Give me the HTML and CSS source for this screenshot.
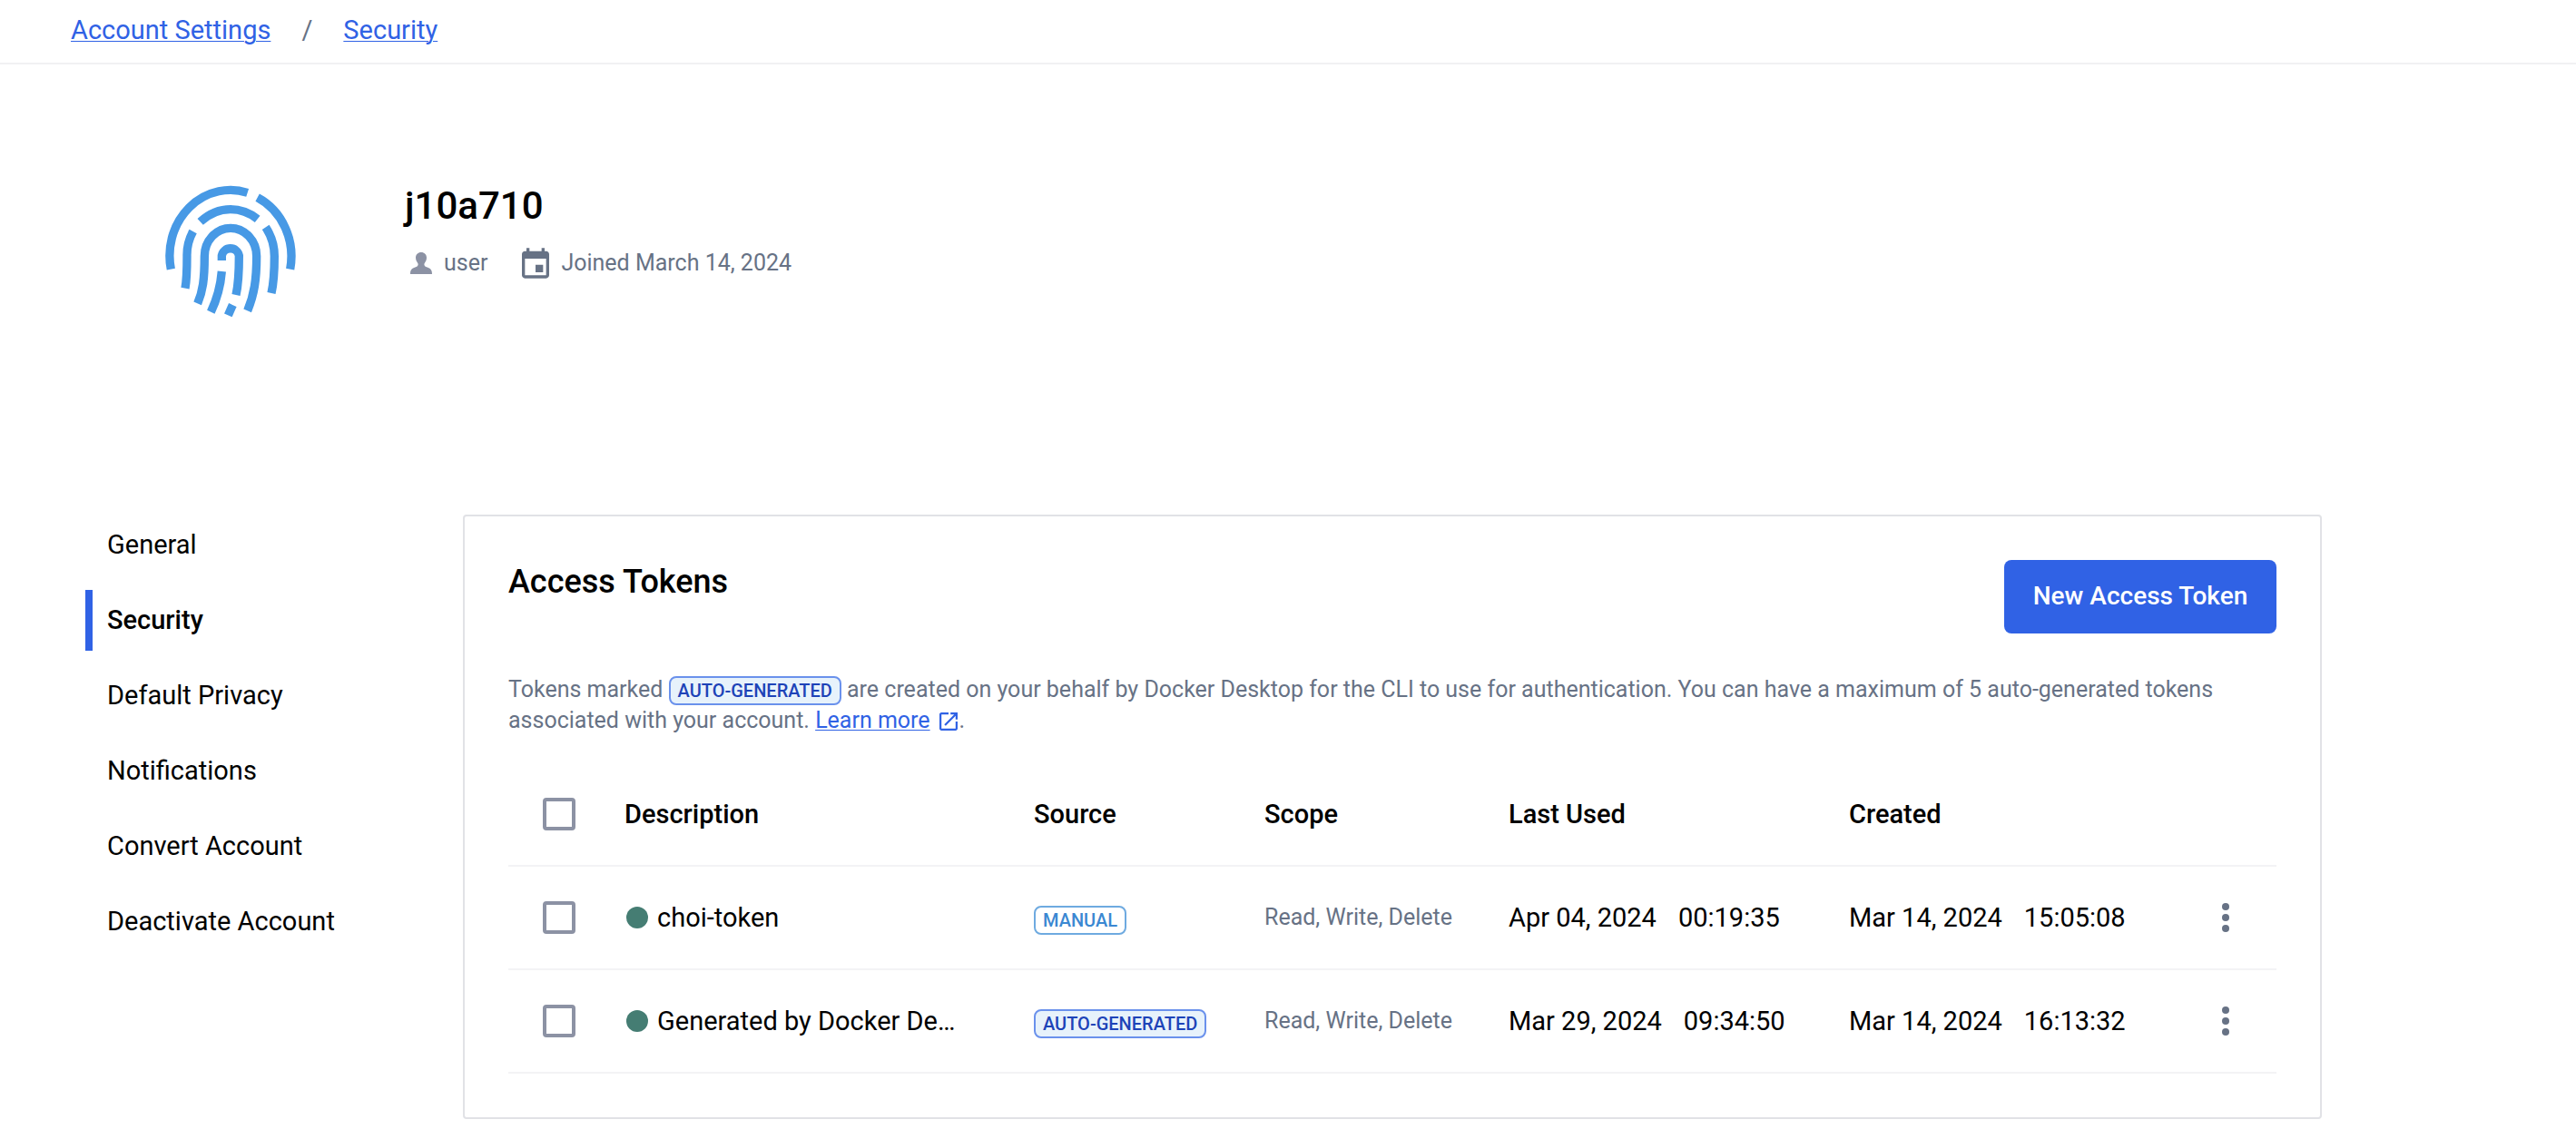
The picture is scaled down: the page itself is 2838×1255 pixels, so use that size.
FILE: index.html
```html
<!DOCTYPE html>
<html lang="en">
<head>
<meta charset="utf-8">
<meta name="viewport" content="width=device-width, initial-scale=1">
<title>Security | Account Settings</title>
<link rel="stylesheet" href="styles.css">
</head>
<body>
<nav class="breadcrumb" aria-label="Breadcrumb">
  <a class="link" href="#account">Account Settings</a>
  <span class="breadcrumb-separator">/</span>
  <a class="link" href="#security">Security</a>
</nav>

<header class="profile">
  <svg class="avatar" viewBox="0 0 510 495" fill="none" stroke="#4799e5" stroke-width="28" aria-hidden="true">
    <path d="M55 305A201 217 0 0 1 308 52"/>
    <path d="M341 68A201 217 0 0 1 449 305"/>
    <path d="M152 148Q197 107 252 107Q300 107 341 139"/>
    <path d="M128 180Q107 218 108 262C108 305 108 335 102 368"/>
    <path d="M368 166Q397 210 397 262C397 310 396 345 387 384"/>
    <path d="M143 418C160 378 166 340 166 262A86 93 0 0 1 338 262C338 340 330 390 308 442"/>
    <path d="M223 276V260A29 29 0 0 1 280 260C280 310 279 350 270 390"/>
    <path d="M223 312C219 360 209 400 187 446"/>
    <path d="M259 423L244 457"/>
  </svg>
  <div class="profile-info">
    <h1 class="profile-name">j10a710</h1>
    <div class="profile-meta">
      <span class="meta-item">
        <svg class="icon-user" viewBox="0 0 24 24" fill="#8c92a4" aria-hidden="true"><path d="M12 0C8.500 0 6 2.500 6 6C6 9 7.500 10.500 8.500 12.500C9 14.500 8 15.500 6 16.300C2.500 17.500 0 18.500 0 24H24C24 18.500 21.500 17.500 18 16.300C16 15.500 15 14.500 15.500 12.500C16.500 10.500 18 9 18 6C18 2.500 15.500 0 12 0Z"/></svg>
        user
      </span>
      <span class="meta-item">
        <svg class="icon-calendar" viewBox="3 1 18 20" fill="#677285" aria-hidden="true"><path d="M19 3h-1V1h-2v2H8V1H6v2H5c-1.110 0-2 .9-2 2v14c0 1.100.89 2 2 2h14c1.100 0 2-.9 2-2V5c0-1.100-.9-2-2-2zm0 16H5V8h14v11zm-7-7h5v5h-5z"/></svg>
        Joined March 14, 2024
      </span>
    </div>
  </div>
</header>

<div class="layout">
  <nav class="side-nav" aria-label="Settings">
    <a class="side-link" href="#general">General</a>
    <a class="side-link side-link-active" href="#security" aria-current="page">Security</a>
    <a class="side-link" href="#privacy">Default Privacy</a>
    <a class="side-link" href="#notifications">Notifications</a>
    <a class="side-link" href="#convert">Convert Account</a>
    <a class="side-link" href="#deactivate">Deactivate Account</a>
  </nav>

  <main class="panel">
    <div class="panel-header">
      <h2 class="panel-title">Access Tokens</h2>
      <button class="primary-button" type="button">New Access Token</button>
    </div>
    <p class="panel-text">Tokens marked <span class="chip chip-auto">AUTO-GENERATED</span> are created on your behalf by Docker Desktop for the CLI to use for authentication. You can have a maximum of 5 auto-generated tokens associated with your account. <a class="link" href="#learn">Learn more</a><svg class="icon-external" viewBox="3 3 18 18" fill="#3062e5" aria-hidden="true"><path d="M19 19H5V5h7V3H5c-1.110 0-2 .9-2 2v14c0 1.100.89 2 2 2h14c1.100 0 2-.9 2-2v-7h-2v7zM14 3v2h3.590l-9.830 9.830 1.410 1.410L19 6.410V10h2V3h-7z"/></svg>.</p>

    <table class="tokens">
      <colgroup>
        <col class="col-check"><col class="col-description"><col class="col-source"><col class="col-scope"><col class="col-used"><col class="col-created"><col class="col-menu">
      </colgroup>
      <thead>
        <tr>
          <th class="cell-check"><input class="checkbox" type="checkbox" aria-label="Select all tokens"></th>
          <th>Description</th>
          <th>Source</th>
          <th>Scope</th>
          <th>Last Used</th>
          <th>Created</th>
          <td></td>
        </tr>
      </thead>
      <tbody>
        <tr>
          <td class="cell-check"><input class="checkbox" type="checkbox" aria-label="Select choi-token"></td>
          <td><div class="description"><span class="status"></span><span class="description-text">choi-token</span></div></td>
          <td><span class="chip chip-manual">MANUAL</span></td>
          <td class="cell-scope">Read, Write, Delete</td>
          <td><div class="date"><span>Apr 04, 2024</span><span>00:19:35</span></div></td>
          <td><div class="date"><span>Mar 14, 2024</span><span>15:05:08</span></div></td>
          <td class="cell-menu"><button class="menu-button" type="button" aria-label="Token actions"><svg class="icon-more" viewBox="0 0 8 32" fill="#677285" aria-hidden="true"><circle cx="4" cy="4" r="4"/><circle cx="4" cy="16" r="4"/><circle cx="4" cy="28" r="4"/></svg></button></td>
        </tr>
        <tr>
          <td class="cell-check"><input class="checkbox" type="checkbox" aria-label="Select Generated by Docker Desktop"></td>
          <td><div class="description"><span class="status"></span><span class="description-text">Generated by Docker De…</span></div></td>
          <td><span class="chip chip-auto">AUTO-GENERATED</span></td>
          <td class="cell-scope">Read, Write, Delete</td>
          <td><div class="date"><span>Mar 29, 2024</span><span>09:34:50</span></div></td>
          <td><div class="date"><span>Mar 14, 2024</span><span>16:13:32</span></div></td>
          <td class="cell-menu"><button class="menu-button" type="button" aria-label="Token actions"><svg class="icon-more" viewBox="0 0 8 32" fill="#677285" aria-hidden="true"><circle cx="4" cy="4" r="4"/><circle cx="4" cy="16" r="4"/><circle cx="4" cy="28" r="4"/></svg></button></td>
        </tr>
      </tbody>
    </table>
  </main>
</div>
</body>
</html>
```
FILE: styles.css
```css
* {
  box-sizing: border-box;
}

body {
  margin: 0;
  background: #fff;
  color: #000;
  font-family: Roboto, "Liberation Sans", sans-serif;
  font-size: 29px;
  line-height: 40px;
}

.link {
  color: #3062e5;
  text-decoration: underline;
  text-decoration-thickness: 1px;
  text-underline-offset: 2px;
}

.breadcrumb {
  display: flex;
  gap: 34px;
  padding: 13px 78px 16px;
  border-bottom: 2px solid #f1f1f3;
}

.breadcrumb-separator {
  color: #677285;
}

.profile {
  display: flex;
  gap: 106px;
  padding: 124px 170px 207px;
}

.avatar {
  width: 170px;
  height: 165px;
}

.profile-info {
  padding-top: 4px;
}

.profile-name {
  margin: 0 0 18px;
  font-size: 42px;
  font-weight: 500;
  line-height: 56px;
}

.profile-meta {
  display: flex;
  gap: 38px;
  padding-left: 6px;
  color: #677285;
  font-size: 25px;
  line-height: 34px;
}

.meta-item {
  display: flex;
  align-items: center;
  gap: 13px;
}

.icon-user {
  width: 24px;
  height: 24px;
}

.icon-calendar {
  width: 30px;
  height: 34px;
}

.layout {
  display: grid;
  grid-template-columns: 416px minmax(0, 2048px);
  padding: 0 94px 18px;
}

.side-nav {
  display: flex;
  flex-direction: column;
  gap: 16px;
}

.side-link {
  padding: 13px 16px 14px;
  border-left: 8px solid transparent;
  color: #000;
  text-decoration: none;
}

.side-link-active {
  border-left-color: #3062e5;
  font-weight: 500;
}

.panel {
  padding: 48px;
  border: 2px solid #e1e2e6;
  border-radius: 4px;
}

.panel-header {
  display: flex;
  align-items: flex-start;
  justify-content: space-between;
}

.panel-title {
  margin: 0;
  font-size: 36px;
  font-weight: 500;
  line-height: 48px;
}

.primary-button {
  width: 300px;
  padding: 20px 0 21px;
  border: 0;
  border-radius: 8px;
  background: #3062e5;
  color: #fff;
  font: inherit;
  font-size: 28px;
  font-weight: 500;
}

.panel-text {
  margin: 45px 0 29px;
  color: #677285;
  font-size: 25px;
  line-height: 34px;
}

.chip {
  display: inline-block;
  padding: 0 8px;
  border: 2px solid;
  border-radius: 8px;
  font-size: 20px;
  font-weight: 500;
  line-height: 28px;
}

.chip-auto {
  border-color: #6a91ec;
  background: #e7f2fb;
  color: #1d43b8;
}

.chip-manual {
  border-color: #6eaae0;
  color: #3b88d2;
}

.icon-external {
  width: 20px;
  height: 20px;
  margin: 0 2px 0 10px;
  vertical-align: -3px;
}

.tokens {
  width: 100%;
  border-collapse: collapse;
  table-layout: fixed;
}

.tokens tr {
  height: 114px;
  border-bottom: 2px solid #f3f3f5;
}

.tokens th,
.tokens td {
  padding: 0;
  font-weight: 400;
  text-align: left;
}

.tokens th {
  font-weight: 500;
}

.col-check { width: 128px; }
.col-source { width: 254px; }
.col-scope { width: 269px; }
.col-used { width: 375px; }
.col-created { width: 375px; }
.col-menu { width: 96px; }

.tokens .cell-check {
  padding-left: 38px;
}

.tokens .cell-scope {
  color: #677285;
  font-size: 25px;
}

.checkbox {
  display: block;
  width: 36px;
  height: 36px;
  margin: 0;
  border: 4px solid #8c92a4;
  border-radius: 4px;
  appearance: none;
}

.description {
  display: flex;
  align-items: center;
  gap: 10px;
  padding-left: 2px;
}

.status {
  flex: none;
  width: 24px;
  height: 24px;
  border-radius: 50%;
  background: #457d73;
}

.description-text {
  overflow: hidden;
  text-overflow: ellipsis;
  white-space: nowrap;
}

.date {
  display: flex;
  gap: 24px;
}

.menu-button {
  display: flex;
  justify-content: center;
  width: 80px;
  padding: 8px 0;
  border: 0;
  background: none;
}

.icon-more {
  width: 8px;
  height: 32px;
}
```
